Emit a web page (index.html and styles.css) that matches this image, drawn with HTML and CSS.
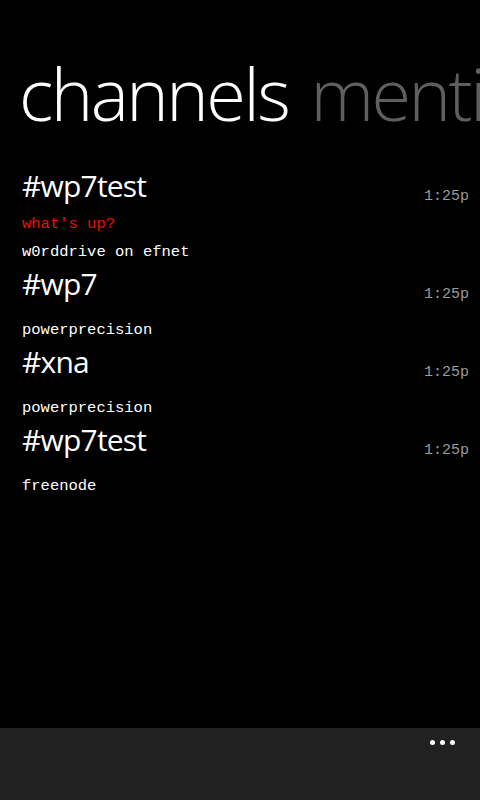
FILE: index.html
```html
<!DOCTYPE html>
<html>
<head>
<meta charset="utf-8">
<link rel="stylesheet" href="styles.css">
</head>
<body>
<div class="page">
  <div class="header"><span class="pivot-active">channels</span> <span class="pivot-next">mentions</span></div>
  <div class="list">
    <div class="item">
      <div class="info">
        <div class="title">#wp7test</div>
        <div class="msg">what's up?</div>
        <div class="sub">w0rddrive on efnet</div>
      </div>
      <div class="time">1:25p</div>
    </div>
    <div class="item">
      <div class="info">
        <div class="title">#wp7</div>
        <div class="sub">powerprecision</div>
      </div>
      <div class="time">1:25p</div>
    </div>
    <div class="item">
      <div class="info">
        <div class="title">#xna</div>
        <div class="sub">powerprecision</div>
      </div>
      <div class="time">1:25p</div>
    </div>
    <div class="item">
      <div class="info">
        <div class="title">#wp7test</div>
        <div class="sub">freenode</div>
      </div>
      <div class="time">1:25p</div>
    </div>
  </div>
  <div class="appbar">
    <div class="dots"><span class="dot"></span><span class="dot"></span><span class="dot"></span></div>
  </div>
</div>
</body>
</html>
```
FILE: styles.css
```css
html, body {
  margin: 0;
  padding: 0;
  background: #000;
}
.page {
  width: 480px;
  height: 800px;
  display: flex;
  flex-direction: column;
  background: #000;
  overflow: hidden;
  padding-top: 53px;
  box-sizing: border-box;
}
.header {
  font-family: "Open Sans", "Noto Sans", sans-serif;
  font-weight: 300;
  font-size: 72px;
  line-height: 80px;
  white-space: nowrap;
  padding-left: 19px;
  letter-spacing: -2.5px;
  word-spacing: 6px;
}
.pivot-active { color: #fff; }
.pivot-next { color: #5f5f5f; }
.list {
  flex: 1;
  padding-top: 32px;
}
.item {
  display: flex;
  justify-content: space-between;
  align-items: flex-start;
  padding: 0 11px 0 22px;
}
.title {
  font-family: "Open Sans", "Noto Sans", sans-serif;
  font-size: 30px;
  line-height: 40px;
  letter-spacing: -0.8px;
  padding-top: 1px;
  margin-bottom: -1px;
  color: #fff;
}
.msg, .sub {
  font-family: "Liberation Mono", monospace;
  font-size: 15.5px;
  line-height: 22px;
  white-space: nowrap;
}
.msg {
  color: #e51400;
  margin-top: 8px;
  margin-bottom: -10px;
}
.sub {
  color: #fff;
  margin-top: 16px;
}
.time {
  font-family: "Liberation Mono", monospace;
  font-size: 15px;
  color: #9a9a9a;
  line-height: 22px;
  margin-top: 21px;
}
.appbar {
  height: 72px;
  background: #212121;
  display: flex;
  justify-content: flex-end;
  align-items: flex-start;
}
.dots {
  display: flex;
  gap: 5px;
  padding: 12px 25px 0 0;
}
.dot {
  width: 5px;
  height: 5px;
  border-radius: 50%;
  background: #fff;
}
```
